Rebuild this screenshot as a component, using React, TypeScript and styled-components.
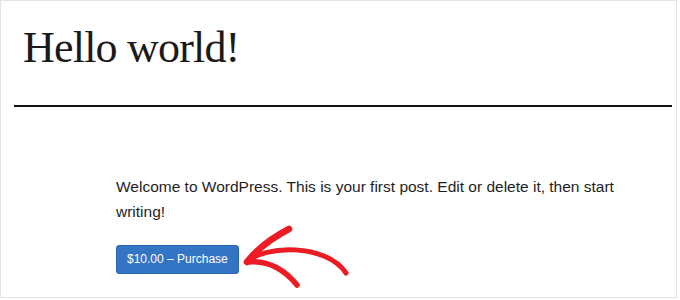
import React from 'react';
import styled, { createGlobalStyle } from 'styled-components';

const GlobalStyle = createGlobalStyle`
    html, body {
        margin: 0;
        padding: 0;
        background: #ffffff;
    }

    * {
        box-sizing: border-box;
    }
`

const Frame = styled.div`
    width: 677px;
    height: 298px;
    border: 1px solid #e4e4e4;
    background: #ffffff;
    overflow: hidden;
`

const Header = styled.header`
    padding: 21px 4px 0 13px;
`

const Title = styled.h1`
    margin: 0 0 0 9px;
    font-family: "Liberation Serif", "DejaVu Serif", serif;
    font-weight: 300;
    font-size: 44px;
    line-height: 1.2;
    letter-spacing: -0.8px;
    color: #1a1a1a;
`

const Rule = styled.hr`
    margin: 30px 0 0 0;
    border: none;
    border-top: 2px solid #111111;
    height: 0;
`

const Content = styled.main`
    padding: 67px 0 0 115px;
    width: 660px;
`

const Paragraph = styled.p`
    margin: 0;
    font-family: "Liberation Sans", Arial, sans-serif;
    font-size: 15.5px;
    line-height: 25px;
    color: #1e1e1e;
`

const PurchaseRow = styled.div`
    position: relative;
    margin-top: 21px;
    display: flex;
    align-items: center;
`

const PurchaseButton = styled.button`
    height: 29px;
    padding: 0 10px;
    border: 1px solid #2c66b3;
    border-radius: 3px;
    background: #3474c4;
    color: #ffffff;
    font-family: "Liberation Sans", Arial, sans-serif;
    font-size: 12px;
    cursor: pointer;
`

// hand-drawn arrow that sits over the page, pointing at the button
const Arrow = styled.svg`
    position: absolute;
    left: 131px;
    top: -25px;
    overflow: visible;
`

const App: React.FC = () => {
    return (
        <>
            <GlobalStyle />
            <Frame>
                <Header>
                    <Title>Hello world!</Title>
                    <Rule />
                </Header>

                <Content>
                    <Paragraph>
                        Welcome to WordPress. This is your first post. Edit or delete it, then start writing!
                    </Paragraph>

                    <PurchaseRow>
                        <PurchaseButton type="button">$10.00 – Purchase</PurchaseButton>

                        <Arrow width="120" height="70" viewBox="247 220 120 70">
                            <g fill="none" stroke="#ec1b24" strokeLinecap="round" strokeLinejoin="round">
                                <path d="M247 262 C 264 245, 326 243, 346 273" strokeWidth="5" />
                                <path d="M247 262 Q 262 243, 289 229" strokeWidth="6.5" />
                                <path d="M247 262 Q 276 259, 297 285" strokeWidth="5.5" />
                            </g>
                        </Arrow>
                    </PurchaseRow>
                </Content>
            </Frame>
        </>
    );
}

export default App;
